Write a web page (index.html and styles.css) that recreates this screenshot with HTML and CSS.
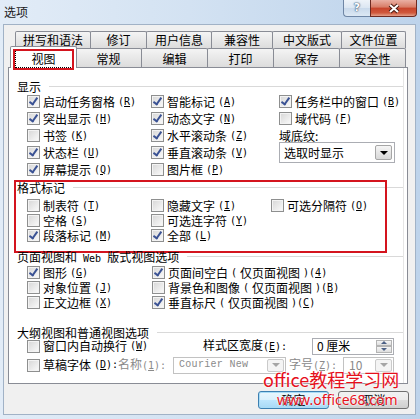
FILE: index.html
```html
<!DOCTYPE html>
<html lang="zh-CN">
<head>
    <meta charset="UTF-8">
    <title>选项</title>
    <link rel="stylesheet" href="styles.css">
</head>
<body>

<div class="window">
    <div class="titlebar">
        <span class="title">选项</span>
        <div class="caption">
            <span class="cap-help">?</span>
            <span class="cap-close">
                <svg width="14" height="11" viewBox="0 0 14 11">
                    <path d="M3 2 L11 9 M11 2 L3 9" stroke="#4a1a12" stroke-width="4"/>
                    <path d="M3 2 L11 9 M11 2 L3 9" stroke="#fff" stroke-width="2"/>
                </svg>
            </span>
        </div>
    </div>

    <div class="client">
        <div class="tabs">
            <div class="tab-row back">
                <div class="tab w1">拼写和语法</div>
                <div class="tab w2">修订</div>
                <div class="tab w3">用户信息</div>
                <div class="tab w4">兼容性</div>
                <div class="tab w5">中文版式</div>
                <div class="tab w6">文件位置</div>
            </div>
            <div class="tab-row front">
                <div class="tab active"><span class="focus">视图</span></div>
                <div class="tab">常规</div>
                <div class="tab">编辑</div>
                <div class="tab">打印</div>
                <div class="tab">保存</div>
                <div class="tab">安全性</div>
            </div>
        </div>

        <div class="page">
            <div class="group">
                <div class="group-title"><span>显示</span></div>
                <div class="grid grid-show">
                    <span class="check on"><i class="box"></i>启动任务窗格<span class="key">(<u>R</u>)</span></span>
                    <span class="check on"><i class="box"></i>智能标记<span class="key">(<u>A</u>)</span></span>
                    <span class="check on"><i class="box"></i>任务栏中的窗口<span class="key">(<u>B</u>)</span></span>
                    <span class="check on"><i class="box"></i>突出显示<span class="key">(<u>H</u>)</span></span>
                    <span class="check on"><i class="box"></i>动态文字<span class="key">(<u>N</u>)</span></span>
                    <span class="check"><i class="box"></i>域代码<span class="key">(<u>F</u>)</span></span>
                    <span class="check"><i class="box"></i>书签<span class="key">(<u>K</u>)</span></span>
                    <span class="check on"><i class="box"></i>水平滚动条<span class="key">(<u>Z</u>)</span></span>
                    <span class="field-label">域底纹<u>:</u></span>
                    <span class="check on"><i class="box"></i>状态栏<span class="key">(<u>U</u>)</span></span>
                    <span class="check on"><i class="box"></i>垂直滚动条<span class="key">(<u>V</u>)</span></span>
                    <div class="combo shading">
                        <span class="combo-text">选取时显示</span>
                        <span class="combo-btn"><i class="arrow"></i></span>
                    </div>
                    <span class="check on"><i class="box"></i>屏幕提示<span class="key">(<u>Q</u>)</span></span>
                    <span class="check"><i class="box"></i>图片框<span class="key">(<u>P</u>)</span></span>
                </div>
            </div>

            <div class="group group-marks">
                <div class="group-title"><span>格式标记</span></div>
                <div class="grid grid-marks">
                    <span class="check"><i class="box"></i>制表符<span class="key">(<u>T</u>)</span></span>
                    <span class="check"><i class="box"></i>隐藏文字<span class="key">(<u>I</u>)</span></span>
                    <span class="check"><i class="box"></i>可选分隔符<span class="key">(<u>O</u>)</span></span>
                    <span class="check"><i class="box"></i>空格<span class="key">(<u>S</u>)</span></span>
                    <span class="check"><i class="box"></i>可选连字符<span class="key">(<u>Y</u>)</span></span>
                    <span class="check on row-start"><i class="box"></i>段落标记<span class="key">(<u>M</u>)</span></span>
                    <span class="check on"><i class="box"></i>全部<span class="key">(<u>L</u>)</span></span>
                </div>
            </div>

            <div class="group group-page">
                <div class="group-title"><span>页面视图和<span class="latin"> Web </span>版式视图选项</span></div>
                <div class="grid grid-page">
                    <span class="check on"><i class="box"></i>图形<span class="key">(<u>G</u>)</span></span>
                    <span class="check on"><i class="box"></i>页面间空白<span class="key">(</span>仅页面视图<span class="key">)(<u>4</u>)</span></span>
                    <span class="check"><i class="box"></i>对象位置<span class="key">(<u>J</u>)</span></span>
                    <span class="check"><i class="box"></i>背景色和图像<span class="key">(</span>仅页面视图<span class="key">)(<u>B</u>)</span></span>
                    <span class="check"><i class="box"></i>正文边框<span class="key">(<u>X</u>)</span></span>
                    <span class="check on"><i class="box"></i>垂直标尺<span class="key">(</span>仅页面视图<span class="key">)(<u>C</u>)</span></span>
                </div>
            </div>

            <div class="group group-outline">
                <div class="group-title"><span>大纲视图和普通视图选项</span></div>
                <div class="outline-row first">
                    <span class="check wrap"><i class="box"></i>窗口内自动换行<span class="key">(<u>W</u>)</span></span>
                    <span class="field-label style-width">样式区宽度<span class="key">(<u>E</u>):</span></span>
                    <div class="spin">
                        <span class="spin-text">0 厘米</span>
                        <span class="spin-btns">
                            <span class="spin-btn"><i class="arrow up"></i></span>
                            <span class="spin-btn"><i class="arrow"></i></span>
                        </span>
                    </div>
                </div>
                <div class="outline-row">
                    <span class="check draft"><i class="box"></i>草稿字体<span class="key">(<u>D</u>):</span></span>
                    <span class="field-label disabled name-label">名称<span class="key">(<u>1</u>):</span></span>
                    <div class="combo disabled font-name">
                        <span class="combo-text mono">Courier New</span>
                        <span class="combo-btn"><i class="arrow"></i></span>
                    </div>
                    <span class="field-label disabled size-label">字号<span class="key">(<u>Z</u>):</span></span>
                    <div class="combo disabled font-size">
                        <span class="combo-text">10</span>
                        <span class="combo-btn"><i class="arrow"></i></span>
                    </div>
                </div>
            </div>
        </div>

        <div class="buttons">
            <button class="btn default">确定</button>
            <button class="btn">取消</button>
        </div>

        <div class="watermark">
            <div class="wm-title">office教程学习网</div>
            <div class="wm-url">www.office68.com</div>
        </div>
    </div>
</div>

</body>
</html>
```

FILE: styles.css
```css
* {
    box-sizing: border-box;
}
body {
    margin: 0;
    font-family: "Noto Sans CJK SC", "Noto Sans", sans-serif;
    font-size: 12px;
    color: #000;
    background: #fff;
}
u {
    text-decoration: underline;
}

/* window frame */
.window {
    width: 420px;
    height: 419px;
    overflow: hidden;
    background: linear-gradient(90deg, #e2ecf7 0%, #d3e2f2 45%, #bdd3eb 100%);
}
.titlebar {
    height: 24px;
    display: flex;
    align-items: flex-start;
}
.title {
    padding: 5px 0 0 4px;
    line-height: 14px;
    color: #1a1a1a;
}
.caption {
    display: flex;
    margin: 0 3px 0 auto;
    height: 17px;
}
.cap-help {
    width: 27px;
    height: 17px;
    border: 1px solid #6f86a5;
    border-top: none;
    border-right: none;
    border-radius: 0 0 0 4px;
    background: linear-gradient(#eef3f9, #dbe6f2 50%, #c9d9eb 50%, #dce8f4);
    color: #fff;
    font-family: "DejaVu Sans", sans-serif;
    font-weight: bold;
    font-size: 11px;
    line-height: 15px;
    text-align: center;
    text-shadow: 0 0 1px #45607f, 0 0 1px #45607f, 0 0 2px #45607f;
}
.cap-close {
    width: 47px;
    height: 17px;
    border: 1px solid #6e2a21;
    border-top: none;
    border-radius: 0 0 4px 0;
    background: linear-gradient(#eab0a4, #d87c66 45%, #c7432b 50%, #d0583c 80%, #e4a08a);
    display: flex;
    align-items: center;
    justify-content: center;
}

.client {
    position: relative;
    height: 391px;
    margin: 0 4px 0 3px;
    padding: 6px 7px 0 4px;
    background: #f0f0f0;
    border: 1px solid #a1b2c6;
}

/* tabs */
.tabs {
    height: 36px;
}
.tab-row {
    display: flex;
}
.tab-row.back {
    height: 17px;
    margin-left: 7px;
}
.tab-row.front {
    height: 19px;
    margin-left: 2px;
}
.tab {
    flex: none;
    margin-left: -1px;
    border: 1px solid #898c95;
    border-bottom: none;
    border-radius: 2px 2px 0 0;
    background: linear-gradient(#f4f4f4, #e8e8e8 50%, #dcdcdc);
    text-align: center;
    line-height: 15px;
    white-space: nowrap;
}
.tab:first-child {
    margin-left: 0;
}
.back .w1 { width: 76px; }
.back .w2 { width: 57px; }
.back .w3 { width: 66px; }
.back .w4 { width: 62px; }
.back .w5 { width: 70px; }
.back .w6 { width: 65px; }
.front .tab {
    width: 67px;
    padding-top: 2px;
}
.front .tab.active {
    position: relative;
    z-index: 2;
    margin: -2px -1px -1px 0;
    padding-top: 4px;
    background: #fff;
}
.tab.active::after {
    content: "";
    position: absolute;
    left: 2px;
    right: 2px;
    top: 2px;
    bottom: -2px;
    border: 2px solid #d4141e;
}
.focus {
    display: inline-block;
    width: 54px;
    line-height: 14px;
    outline: 1px dotted #000;
    outline-offset: 1px;
}

/* tab page */
.page {
    width: 400px;
    height: 317px;
    padding: 11px 4px 0 0;
    border: 1px solid #898c95;
    background: #fff;
    box-shadow: inset -3px 0 0 #fff, inset -4px 0 0 #e6e6e6;
}
.group {
    position: relative;
}
.group-title {
    display: flex;
    align-items: center;
    height: 14px;
    padding-left: 8px;
    white-space: nowrap;
}
.group-title::after {
    content: "";
    flex: 1;
    margin-left: 8px;
    border-top: 1px solid #d9d9d9;
}
.latin {
    font-family: "DejaVu Sans Mono", monospace;
    font-size: 10px;
    white-space: pre;
}
.group-marks {
    margin-top: 2px;
}
.group-marks::after {
    content: "";
    position: absolute;
    left: 5px;
    top: 0;
    width: 369px;
    height: 69px;
    border: 2px solid #d4141e;
}
.group-page {
    margin-top: 6px;
}
.group-outline {
    margin-top: 15px;
}

.grid {
    display: grid;
    padding-left: 18px;
    align-items: center;
}
.grid-show {
    grid-template-columns: 124px 128px 1fr;
    grid-auto-rows: 17px;
}
.grid-marks {
    grid-template-columns: 124px 120px 1fr;
    grid-auto-rows: 15px;
    margin-top: 4px;
}
.grid-page {
    grid-template-columns: 125px 1fr;
    grid-auto-rows: 15px;
    margin-top: 2px;
}
.row-start {
    grid-column: 1;
}

/* checkboxes */
.check {
    display: flex;
    align-items: center;
    gap: 3px;
    white-space: nowrap;
    line-height: 14px;
}
.box {
    position: relative;
    flex: none;
    width: 13px;
    height: 13px;
    border: 1px solid #8e8f8f;
    background: linear-gradient(135deg, #d6d6d6, #fbfbfb);
    box-shadow: inset 0 0 0 1px #f3f3f3;
}
.check.on .box::after {
    content: "";
    position: absolute;
    left: 3px;
    top: 0;
    width: 3px;
    height: 7px;
    border: solid #3a5294;
    border-width: 0 2px 2px 0;
    transform: rotate(35deg);
}
.key {
    font-family: "DejaVu Sans Mono", monospace;
    font-size: 10px;
}
.field-label {
    white-space: nowrap;
    line-height: 14px;
}
.disabled,
.disabled .combo-text {
    color: #8a8a8a;
}

/* combo boxes */
.combo {
    display: flex;
    align-items: center;
    height: 17px;
    border: 1px solid #abadb3;
    background: #fff;
    padding: 1px;
}
.combo-text {
    flex: 1;
    padding-left: 4px;
    line-height: 14px;
    white-space: nowrap;
}
.combo-btn {
    width: 17px;
    height: 100%;
    display: flex;
    align-items: center;
    justify-content: center;
    border: 1px solid #a6a6a6;
    border-radius: 2px;
    background: linear-gradient(#f6f6f6, #e6e6e6 50%, #d8d8d8);
}
.arrow {
    width: 0;
    height: 0;
    border-left: 4px solid transparent;
    border-right: 4px solid transparent;
    border-top: 4px solid #000;
}
.arrow.up {
    border-top: none;
    border-bottom: 4px solid #000;
}
.shading {
    grid-row: span 2;
    align-self: start;
    width: 116px;
    height: 21px;
    margin-top: -2px;
    padding: 2px;
}
.shading .combo-text {
    padding-left: 2px;
}
.combo.disabled {
    border-color: #c2c2c2;
}
.disabled .combo-btn {
    border-color: #cacaca;
    background: #f4f4f4;
}
.disabled .arrow {
    border-top-color: #a5a5a5;
}
.mono {
    font-family: "Liberation Mono", monospace;
    font-size: 10px;
    letter-spacing: 0.3px;
}

/* outline options */
.outline-row {
    display: flex;
    align-items: center;
    height: 18px;
    padding-left: 18px;
}
.outline-row.first {
    margin-top: -2px;
}
.outline-row + .outline-row {
    margin-top: 1px;
}
.check.wrap {
    width: 176px;
}
.style-width {
    width: 109px;
}
.spin {
    display: flex;
    align-items: center;
    width: 82px;
    height: 17px;
    border: 1px solid #abadb3;
    background: #fff;
    padding: 1px;
}
.spin-text {
    flex: 1;
    padding-left: 3px;
    line-height: 14px;
}
.spin-btns {
    display: flex;
    flex-direction: column;
    width: 16px;
    height: 100%;
}
.spin-btn {
    flex: 1;
    display: flex;
    align-items: center;
    justify-content: center;
    border: 1px solid #b4b4b4;
    background: linear-gradient(#f5f5f5, #dedede);
}
.spin-btn .arrow {
    border-left-width: 3px;
    border-right-width: 3px;
    border-top-width: 3px;
    border-top-color: #4d6185;
}
.spin-btn .arrow.up {
    border-bottom: 3px solid #4d6185;
}
.check.draft {
    width: 91px;
}
.name-label {
    width: 55px;
}
.font-name {
    width: 113px;
}
.size-label {
    width: 54px;
    margin-left: 3px;
}
.font-size {
    width: 51px;
}

/* dialog buttons */
.buttons {
    display: flex;
    justify-content: flex-end;
    gap: 9px;
    margin: 7px -1px 0 0;
}
.btn {
    width: 71px;
    height: 18px;
    padding: 0;
    font: inherit;
    line-height: 14px;
    color: #000;
    border: 1px solid #707070;
    border-radius: 3px;
    background: linear-gradient(#f2f2f2, #ebebeb 50%, #dddddd 50%, #cfcfcf);
}
.btn.default {
    border-color: #3c7fb1;
    box-shadow: inset 0 0 0 1px #a9dcf6;
    background: linear-gradient(#eaf6fd, #d9f0fc 50%, #bee6fd 50%, #a7d9f5);
}

/* site watermark over the screenshot */
.watermark {
    position: absolute;
    left: 259px;
    top: 343px;
    color: #e6101c;
    text-shadow: 0 0 2px #fff, 0 0 2px #fff;
}
.wm-title {
    font-size: 18px;
    line-height: 22px;
}
.wm-url {
    margin: 1px 0 0 14px;
    font-family: "Noto Sans", sans-serif;
    font-size: 14px;
    line-height: 18px;
}
```
